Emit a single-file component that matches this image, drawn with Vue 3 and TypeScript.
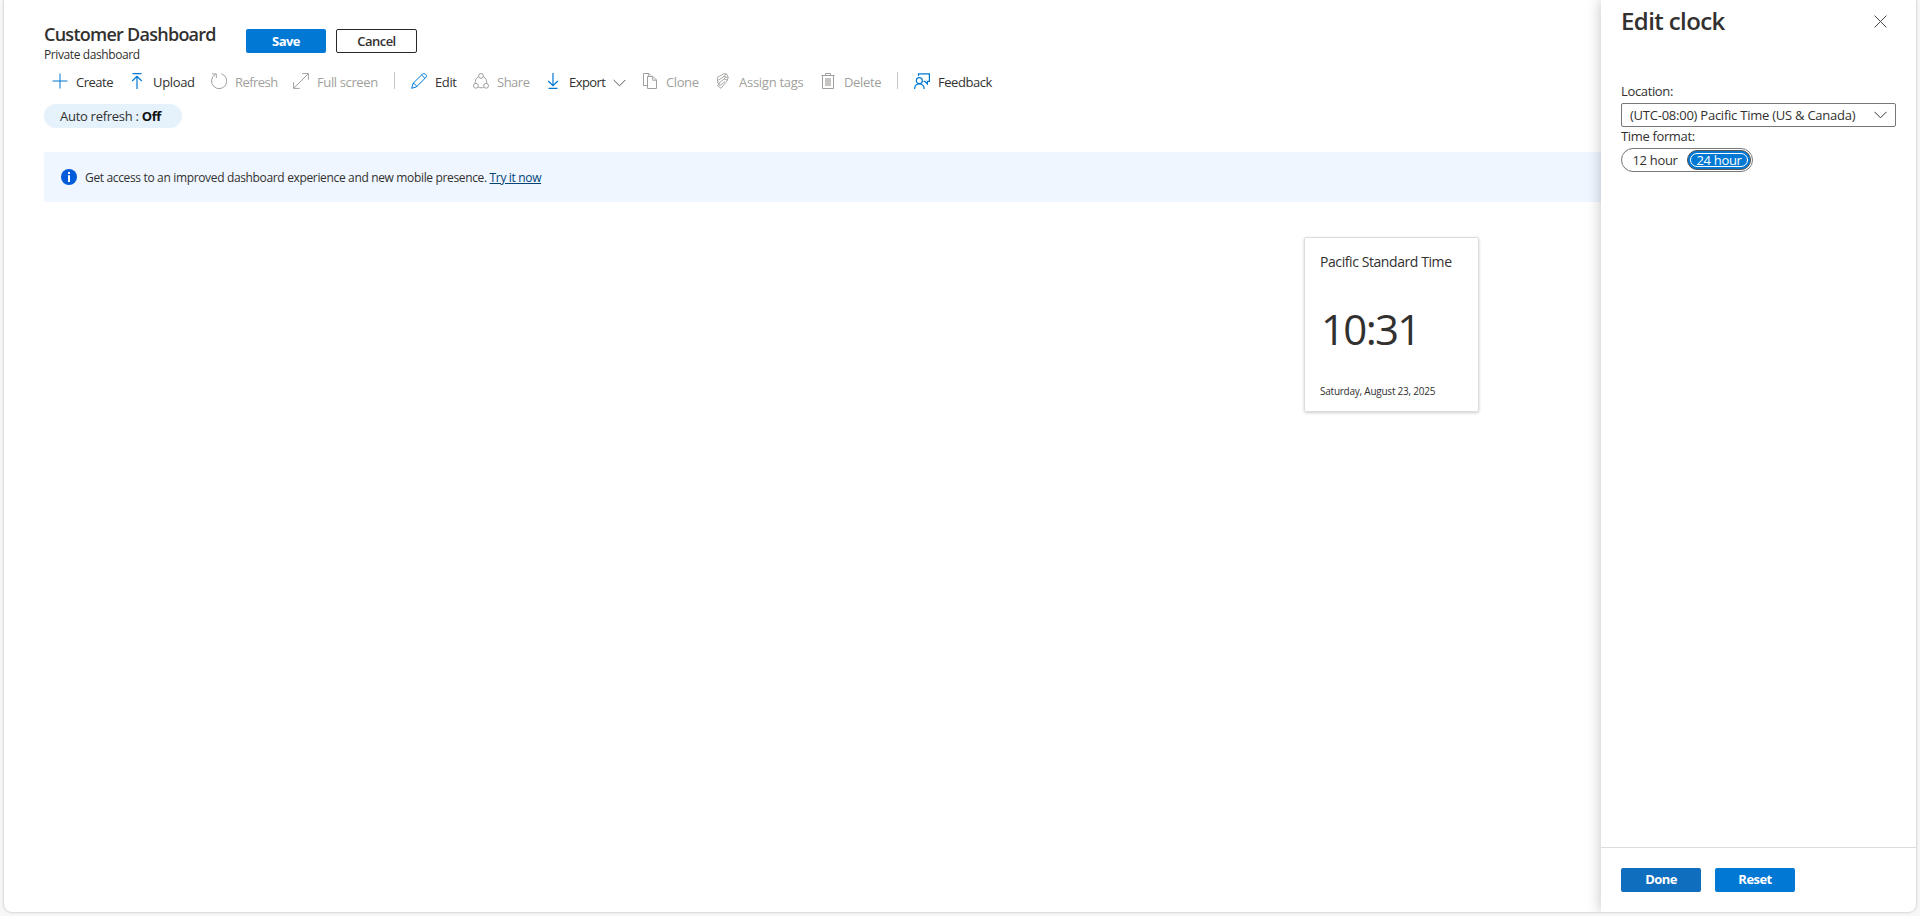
<script setup lang="ts">
import { ref } from 'vue'

interface Command {
  id: string
  label: string
  width: number
  spacing: number
  disabled?: boolean
  chevron?: boolean
  divider?: boolean
}

const commands: Command[] = [
  { id: 'create', label: 'Create', width: 77, spacing: -0.5 },
  { id: 'upload', label: 'Upload', width: 82, spacing: -0.35 },
  { id: 'refresh', label: 'Refresh', width: 82, spacing: -0.55, disabled: true },
  { id: 'fullscreen', label: 'Full screen', width: 118, spacing: -0.38, disabled: true, divider: true },
  { id: 'edit', label: 'Edit', width: 62, spacing: -0.4 },
  { id: 'share', label: 'Share', width: 72, spacing: -0.5, disabled: true },
  { id: 'export', label: 'Export', width: 97, spacing: -0.55, chevron: true },
  { id: 'clone', label: 'Clone', width: 73, spacing: -0.4, disabled: true },
  { id: 'tags', label: 'Assign tags', width: 105, spacing: -0.26, disabled: true },
  { id: 'delete', label: 'Delete', width: 94, spacing: -0.35, disabled: true, divider: true },
  { id: 'feedback', label: 'Feedback', width: 90, spacing: -0.45 },
]

const format = ref<'12' | '24'>('24')
</script>

<template>
  <div class="shell">
    <div class="frame">
      <main class="dashboard">
        <header class="heading">
          <div class="titles">
            <h1>Customer Dashboard</h1>
            <p>Private dashboard</p>
          </div>
          <button class="btn primary">Save</button>
          <button class="btn outline">Cancel</button>
        </header>

        <nav class="commands">
          <div
            v-for="c in commands"
            :key="c.id"
            class="command"
            :class="{ disabled: c.disabled, divider: c.divider }"
            :style="{ width: c.width + 'px' }"
          >
            <svg class="icon" width="16" height="16" viewBox="0 0 16 16" fill="none" stroke="currentColor">
              <path v-if="c.id === 'create'" d="M8 0.5V15.5M0.5 8H15.5" />
              <g v-else-if="c.id === 'upload'" stroke-width="1.2">
                <path d="M3.5 0.6H12.5M8 3.5V16M3.2 8L8 3.3L12.8 8" />
              </g>
              <g v-else-if="c.id === 'refresh'">
                <path d="M10.4 0.8A7.6 7.6 0 1 1 4.3 1.5" />
                <path d="M1 0.9H5.3V5" />
              </g>
              <path v-else-if="c.id === 'fullscreen'" d="M0.7 15.3L15.3 0.7M9.3 0.6H15.4V6.7M0.6 9.3V15.4H6.7" />
              <g v-else-if="c.id === 'edit'">
                <path d="M0.7 15.3L2 10.4L11.5 1.1C12.3 0.4 13.6 0.4 14.6 1.3C15.6 2.3 15.6 3.6 14.9 4.4L5.5 13.9Z" />
                <path d="M2 10.4C3.8 10.5 5.3 12 5.5 13.9M10.6 2L14 5.4" />
              </g>
              <g v-else-if="c.id === 'share'">
                <circle cx="8" cy="2.9" r="2.4" />
                <circle cx="2.9" cy="12.8" r="2.4" />
                <circle cx="13.1" cy="12.8" r="2.4" />
                <path d="M5.7 3.6C3.2 4.8 2 7.5 2.2 10.4M10.3 3.6C12.8 4.8 14 7.5 13.8 10.4M5.1 14C6.9 15.1 9.1 15.1 10.9 14" />
              </g>
              <g v-else-if="c.id === 'export'" stroke-width="1.2">
                <path d="M3.5 15.4H12.5M8 0V12.5M3.2 8L8 12.7L12.8 8" />
              </g>
              <path
                v-else-if="c.id === 'clone'"
                d="M5.5 12.5H1.5V0.5H7L9 2.5M5.5 3.5H11L14.5 7V15.5H5.5ZM10.7 3.5V7.2H14.5M6.7 0.5V3"
              />
              <g v-else-if="c.id === 'tags'" stroke-width="0.9">
                <path d="M2.4 4.3L9 0.7L11.6 0.9L13.3 4.5L11.8 8.2L6 15.3L2.4 12.6L5.2 10.5" />
                <path d="M2.4 4.3L2.5 7.7L9.2 3.3L12.8 4.6M2.5 7.7L3 10.7L9.2 6L12.5 7M3 10.7L5 12.6L10 8.5M9.2 3.3L11 1M9.2 6L10.5 4" />
              </g>
              <g v-else-if="c.id === 'delete'">
                <path d="M1.5 2.5H14.5M5.5 2.5V0.5H10.5V2.5M2.5 2.5V15.5H13.5V2.5" />
                <path d="M5 5H11V13H5Z" fill="currentColor" stroke="none" opacity=".6" />
              </g>
              <g v-else stroke-width="1.2">
                <circle cx="5.3" cy="7.7" r="3" />
                <path d="M0.6 16C0.6 12.7 2.7 10.8 5.3 10.8C8 10.8 10.2 12.8 10.2 16" />
                <path d="M4.5 3V0.8H15.4V8.4H13.4V11L10.7 8.4H9.5" />
              </g>
            </svg>
            <span class="label" :style="{ letterSpacing: c.spacing + 'px' }">{{ c.label }}</span>
            <svg v-if="c.chevron" class="chevron" width="13" height="8" viewBox="0 0 13 8" fill="none" stroke="currentColor">
              <path d="M0.7 1L6.5 6.8L12.3 1" />
            </svg>
          </div>
        </nav>

        <div class="pill">Auto refresh :&nbsp;<b>Off</b></div>

        <div class="notice">
          <svg width="16" height="16" viewBox="0 0 16 16">
            <circle cx="8" cy="8" r="8" fill="#015cda" />
            <path d="M7 6.2H9V13H7ZM7 3H9V5H7Z" fill="#fff" />
          </svg>
          <span>Get access to an improved dashboard experience and new mobile presence. <a>Try it now</a></span>
        </div>

        <section class="canvas">
          <article class="clock">
            <h2>Pacific Standard Time</h2>
            <div class="time">10:31</div>
            <div class="date">Saturday, August 23, 2025</div>
          </article>
        </section>
      </main>

      <aside class="panel">
        <header class="panel-head">
          <h2>Edit clock</h2>
          <svg width="13" height="13" viewBox="0 0 13 13" fill="none" stroke="#444">
            <path d="M0.6 0.6L12.4 12.4M12.4 0.6L0.6 12.4" />
          </svg>
        </header>
        <div class="panel-body">
          <label class="loc">Location:</label>
          <div class="select">
            <span>(UTC-08:00) Pacific Time (US &amp; Canada)</span>
            <svg width="13" height="8" viewBox="0 0 13 8" fill="none" stroke="#333">
              <path d="M0.5 0.8L6.5 6.8L12.5 0.8" />
            </svg>
          </div>
          <label class="fmt">Time format:</label>
          <div class="toggle">
            <button :class="{ active: format === '12' }" @click="format = '12'">12 hour</button>
            <button :class="{ active: format === '24' }" @click="format = '24'">24 hour</button>
          </div>
        </div>
        <footer class="panel-foot">
          <button class="btn done">Done</button>
          <button class="btn primary">Reset</button>
        </footer>
      </aside>
    </div>
  </div>
</template>

<style>
body {
  margin: 0;
  overflow: hidden;
}
</style>

<style scoped>
* {
  box-sizing: border-box;
}
.shell {
  width: 1920px;
  height: 916px;
  padding: 0 4px 4px;
  background: #f7f7f7;
  color: #323130;
  font-family: 'Open Sans', 'Noto Sans', sans-serif;
  font-size: 13px;
}
.frame {
  display: flex;
  height: 912px;
  background: #fff;
  border-radius: 0 0 8px 8px;
  box-shadow: 0 0 3px rgba(0, 0, 0, 0.28);
  overflow: hidden;
}
h1,
h2,
p {
  margin: 0;
}
button {
  font-family: inherit;
  color: inherit;
  padding: 0;
}
.dashboard {
  flex: 1;
  min-width: 0;
  padding-left: 40px;
}
.heading {
  display: flex;
  padding-top: 22px;
  height: 72px;
}
.titles {
  width: 202px;
  white-space: nowrap;
}
h1 {
  font-size: 18px;
  line-height: 24px;
  font-weight: 600;
  letter-spacing: -0.74px;
}
.titles p {
  font-size: 12px;
  line-height: 17px;
  letter-spacing: -0.4px;
}
.btn {
  width: 80px;
  height: 24px;
  border: 0;
  border-radius: 2px;
  color: #fff;
  font-size: 13px;
  line-height: 22px;
  font-weight: 700;
  letter-spacing: -0.55px;
}
.heading .btn {
  margin-top: 7px;
  padding-bottom: 1px;
}
.primary {
  background: #0078d4;
}
.heading .outline {
  width: 81px;
  margin-left: 10px;
  background: #fff;
  border: 1px solid #292827;
  color: #323130;
  font-weight: 600;
  line-height: 20px;
}
.commands {
  display: flex;
  height: 32px;
  padding-left: 8px;
}
.command {
  flex: none;
  display: flex;
  position: relative;
  white-space: nowrap;
}
.icon {
  flex: none;
  margin: 1px 8px 0 0;
  color: #0078d4;
}
.label {
  line-height: 20px;
}
.chevron {
  margin: 7px 0 0 8px;
  color: #555;
}
.disabled,
.disabled .icon {
  color: #a19f9d;
}
.divider::after {
  content: '';
  position: absolute;
  right: 16px;
  top: 0;
  width: 1px;
  height: 17px;
  background: #c8c6c4;
}
.pill {
  width: 138px;
  height: 24px;
  padding-left: 16px;
  border-radius: 12px;
  background: #e5f1fb;
  line-height: 24px;
  letter-spacing: -0.28px;
  white-space: nowrap;
}
.pill b {
  color: #111;
  letter-spacing: -0.4px;
}
.notice {
  display: flex;
  align-items: center;
  height: 50px;
  margin-top: 24px;
  padding-left: 17px;
  gap: 8px;
  border-radius: 2px 0 0 2px;
  background: #eff6ff;
  font-size: 12px;
  letter-spacing: -0.345px;
  white-space: nowrap;
}
.notice span {
  padding-top: 1px;
}
.notice a {
  color: #004578;
  text-decoration: underline;
}
.canvas {
  display: flex;
  justify-content: flex-end;
  padding: 35px 122px 0 0;
}
.clock {
  width: 175px;
  height: 175px;
  padding: 15px 0 0 15px;
  border: 1px solid #dcdcdc;
  border-radius: 2px;
  box-shadow: 0 1px 3px rgba(0, 0, 0, 0.2);
  white-space: nowrap;
}
.clock h2 {
  font-size: 14px;
  font-weight: 400;
  line-height: 18px;
  letter-spacing: -0.42px;
}
.time {
  margin-top: 25px;
  padding-left: 1px;
  font-size: 42px;
  line-height: 66px;
  letter-spacing: -1.7px;
}
.date {
  margin-top: 22px;
  font-size: 10px;
  line-height: 14px;
  letter-spacing: -0.24px;
}
.panel {
  position: relative;
  display: flex;
  flex-direction: column;
  width: 315px;
  background: #fff;
  box-shadow: 0 0 14px rgba(0, 0, 0, 0.24);
}
.panel-head {
  display: flex;
  justify-content: space-between;
  padding: 5px 29px 0 20px;
  height: 82px;
}
.panel-head h2 {
  font-size: 24px;
  line-height: 32px;
  font-weight: 600;
  letter-spacing: -0.6px;
}
.panel-head svg {
  margin-top: 10px;
}
.panel-body {
  flex: 1;
  padding: 0 20px;
  letter-spacing: -0.35px;
}
.panel-body label {
  display: block;
  height: 21px;
  line-height: 19px;
}
.select {
  display: flex;
  align-items: center;
  justify-content: space-between;
  width: 275px;
  height: 24px;
  padding: 0 8px;
  border: 1px solid #777;
  border-radius: 2px;
  letter-spacing: -0.24px;
  white-space: nowrap;
}
.toggle {
  display: flex;
  align-items: center;
  width: 132px;
  height: 24px;
  padding: 0 1px;
  border: 1px solid #777;
  border-radius: 12px;
}
.toggle button {
  width: 64px;
  height: 20px;
  border: 0;
  border-radius: 10px;
  background: none;
  font-size: 13px;
  line-height: 18px;
  letter-spacing: -0.3px;
}
.toggle .active {
  border: 1px solid #555;
  background: #0078d4;
  color: #fff;
  outline: 1px solid #fff;
  outline-offset: -4px;
}
.panel-foot {
  display: flex;
  gap: 14px;
  height: 65px;
  padding: 20px;
  border-top: 1px solid #dcdcdc;
}
.panel-foot .btn {
  padding-bottom: 2px;
}
.done {
  background: #106ebe;
}
</style>
